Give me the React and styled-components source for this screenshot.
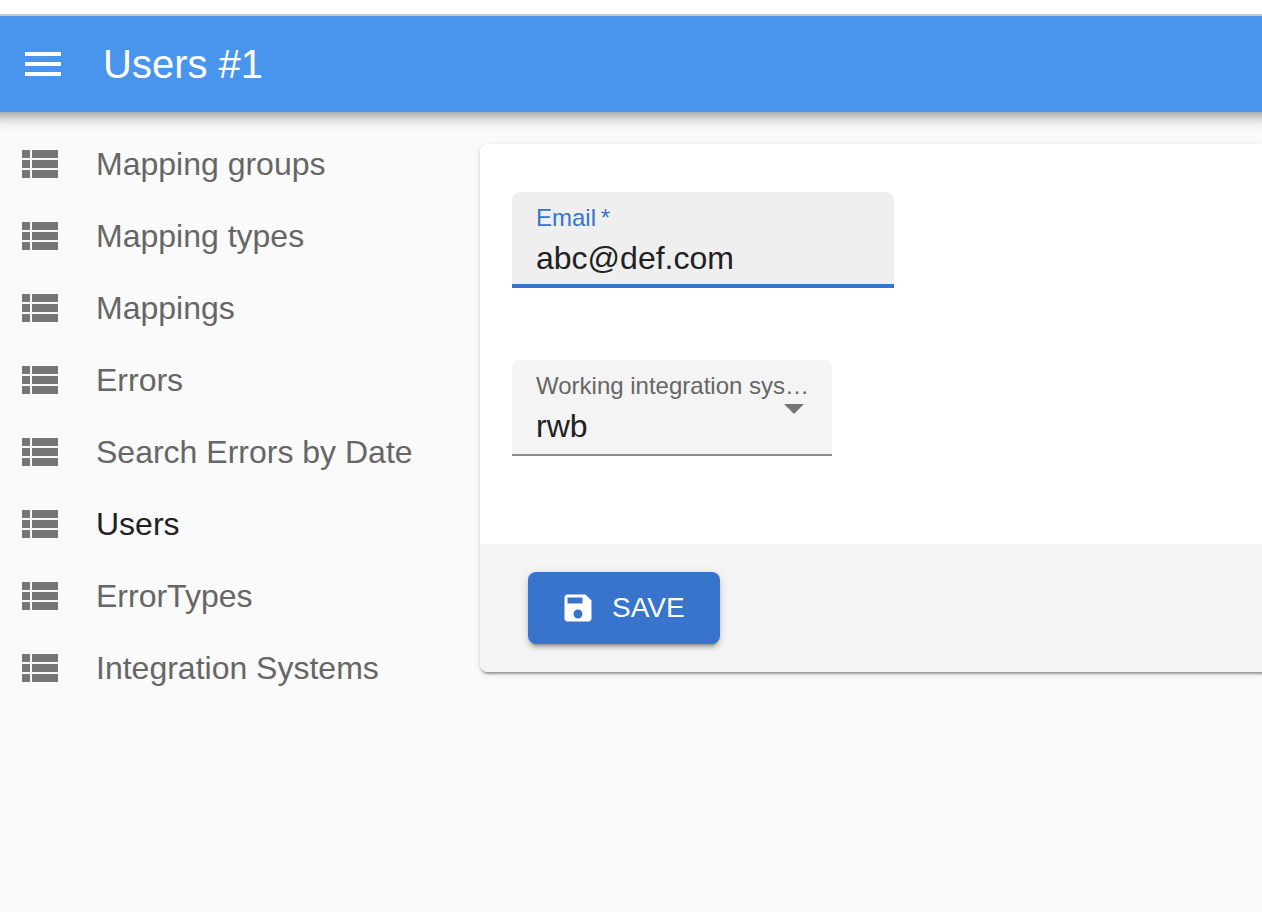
import React, { useState } from "react";
import styled, { createGlobalStyle } from "styled-components";

const GlobalStyle = createGlobalStyle`
  *, *::before, *::after { box-sizing: border-box; }
  body {
    margin: 0;
    background: #fafafa;
    color: #212121;
    font-family: "Liberation Sans", Helvetica, Arial, sans-serif;
    font-size: 32px;
  }
`;

const Page = styled.div`
  min-height: 100vh;
  display: flex;
  flex-direction: column;
  overflow-x: clip;
`;

const TopStrip = styled.div`
  position: relative;
  z-index: 1;
  height: 16px;
  background: #ffffff;
  border-bottom: 2px solid #c8c8c8;
`;

/* The wide spread keeps the shadow even right up to the window's sides. */
const AppBar = styled.header`
  display: flex;
  align-items: center;
  gap: 36px;
  height: 96px;
  padding: 0 19px;
  background: #4994ec;
  color: #ffffff;
  box-shadow:
    0 -12px 8px 14px rgba(0, 0, 0, 0.2),
    0 -8px 10px 16px rgba(0, 0, 0, 0.14),
    0 -14px 20px 16px rgba(0, 0, 0, 0.12);
`;

const MenuButton = styled.button`
  display: flex;
  padding: 0;
  border: 0;
  background: none;
  color: inherit;
  cursor: pointer;
`;

const Title = styled.h1`
  margin: 0;
  font-size: 40px;
  line-height: 64px;
  font-weight: 400;
`;

const Icon = styled.svg`
  flex: none;
  display: block;
  width: ${(p) => p.$size || 48}px;
  height: ${(p) => p.$size || 48}px;
  fill: currentColor;
`;

const Body = styled.div`
  display: flex;
  align-items: flex-start;
  flex: 1;
`;

const Sidebar = styled.nav`
  flex: 0 0 480px;
  padding-top: 16px;
`;

const NavItem = styled.a`
  display: flex;
  align-items: center;
  gap: 32px;
  height: 72px;
  padding: 0 16px;
  color: ${(p) => (p.$active ? "#212121" : "#666666")};
  text-decoration: none;
  white-space: nowrap;

  ${Icon} { color: #757575; }
`;

const Main = styled.main`
  flex: 1;
  min-width: 0;
  padding-top: 32px;
`;

const Card = styled.form`
  margin-right: -8px;
  border-radius: 8px;
  background: #ffffff;
  box-shadow:
    0 4px 2px -2px rgba(0, 0, 0, 0.2),
    0 2px 2px 0 rgba(0, 0, 0, 0.14),
    0 2px 6px 0 rgba(0, 0, 0, 0.12);
`;

const Fields = styled.div`
  display: flex;
  flex-direction: column;
  gap: 72px;
  padding: 48px 32px 88px;
`;

const Field = styled.div`
  position: relative;
  display: flex;
  flex-direction: column;
  gap: 8px;
  width: ${(p) => p.$width}px;
  max-width: 100%;
  height: 96px;
  padding: 12px 18px 0 24px;
  border-radius: 8px 8px 0 0;
  background: ${(p) => (p.$focused ? "#efefef" : "#f4f4f4")};
  border-bottom: ${(p) => (p.$focused ? "4px solid #3874cb" : "2px solid #8c8c8c")};
  color: ${(p) => (p.$focused ? "#3874cb" : "#666666")};
`;

const Label = styled.label`
  flex: none;
  overflow: hidden;
  font-size: 24px;
  line-height: 28px;
  text-overflow: ellipsis;
  white-space: nowrap;
`;

const Input = styled.input`
  width: 100%;
  height: 36px;
  padding: 0;
  border: 0;
  outline: 0;
  background: none;
  color: #212121;
  font: inherit;
`;

const Select = styled.select`
  width: 100%;
  height: 36px;
  padding: 0;
  border: 0;
  outline: 0;
  appearance: none;
  background: none;
  color: #212121;
  font: inherit;
`;

const Arrow = styled.span`
  position: absolute;
  top: 24px;
  right: 14px;
  color: #757575;
  pointer-events: none;
`;

const Toolbar = styled.div`
  padding: 28px 48px;
  border-radius: 0 0 8px 8px;
  background: #f4f4f4;
`;

const SaveButton = styled.button`
  display: flex;
  align-items: center;
  gap: 16px;
  min-width: 192px;
  height: 72px;
  padding: 0 32px;
  border: 0;
  border-radius: 8px;
  background: #3874cb;
  color: #ffffff;
  font: inherit;
  font-size: 28px;
  text-transform: uppercase;
  cursor: pointer;
  box-shadow:
    0 6px 2px -4px rgba(0, 0, 0, 0.2),
    0 4px 4px 0 rgba(0, 0, 0, 0.14),
    0 2px 10px 0 rgba(0, 0, 0, 0.12);
`;

const sections = [
  "Mapping groups",
  "Mapping types",
  "Mappings",
  "Errors",
  "Search Errors by Date",
  "Users",
  "ErrorTypes",
  "Integration Systems",
];

function ListIcon() {
  return (
    <Icon viewBox="0 0 24 24" aria-hidden="true">
      <path d="M3 5h4v4H3zM3 10h4v4H3zM3 15h4v4H3zM8 5h13v4H8zM8 10h13v4H8zM8 15h13v4H8z" />
    </Icon>
  );
}

export default function App() {
  const [email, setEmail] = useState("abc@def.com");

  return (
    <Page>
      <GlobalStyle />
      <TopStrip />
      <AppBar>
        <MenuButton type="button" aria-label="Toggle menu">
          <Icon viewBox="0 0 24 24" aria-hidden="true">
            <path d="M3 18h18v-2H3v2zm0-5h18v-2H3v2zm0-7v2h18V6H3z" />
          </Icon>
        </MenuButton>
        <Title>Users #1</Title>
      </AppBar>
      <Body>
        <Sidebar>
          {sections.map((name) => (
            <NavItem key={name} href="#" $active={name === "Users"}>
              <ListIcon />
              {name}
            </NavItem>
          ))}
        </Sidebar>
        <Main>
          <Card onSubmit={(e) => e.preventDefault()}>
            <Fields>
              <Field $width={382} $focused>
                <Label htmlFor="email">Email&thinsp;*</Label>
                <Input
                  id="email"
                  type="text"
                  required
                  value={email}
                  onChange={(e) => setEmail(e.target.value)}
                />
              </Field>
              <Field $width={320}>
                <Label htmlFor="system">Working integration system</Label>
                <Select id="system" defaultValue="rwb">
                  <option value="rwb">rwb</option>
                </Select>
                <Arrow>
                  <Icon viewBox="0 0 24 24" aria-hidden="true">
                    <path d="M7 10l5 5 5-5z" />
                  </Icon>
                </Arrow>
              </Field>
            </Fields>
            <Toolbar>
              <SaveButton type="submit">
                <Icon $size={36} viewBox="0 0 24 24" aria-hidden="true">
                  <path d="M17 3H5c-1.11 0-2 .9-2 2v14c0 1.1.89 2 2 2h14c1.1 0 2-.9 2-2V7l-4-4zm-5 16c-1.66 0-3-1.34-3-3s1.34-3 3-3 3 1.34 3 3-1.34 3-3 3zm3-10H5V5h10v4z" />
                </Icon>
                Save
              </SaveButton>
            </Toolbar>
          </Card>
        </Main>
      </Body>
    </Page>
  );
}
